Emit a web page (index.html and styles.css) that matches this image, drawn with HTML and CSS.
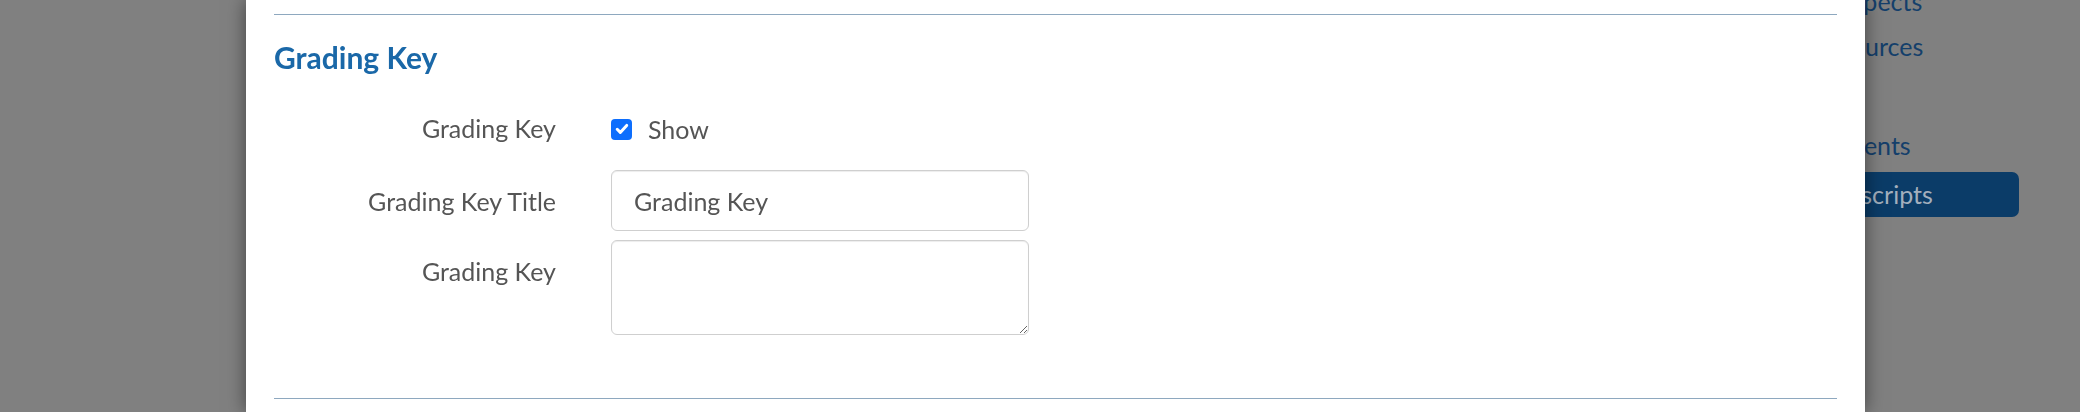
FILE: index.html
```html
<!DOCTYPE html>
<html lang="en">
<head>
<meta charset="utf-8">
<title>Grading Key</title>
<link rel="stylesheet" href="styles.css">
</head>
<body>
<div class="page">
  <nav class="sidebar">
    <a class="nav-item nav-prospects">Prospects</a>
    <a class="nav-item nav-resources">Resources</a>
    <span class="nav-divider"></span>
    <a class="nav-item nav-students">Students</a>
    <a class="nav-item nav-transcripts active">Transcripts</a>
  </nav>
</div>
<div class="modal">
  <div class="modal-body">
    <section class="section">
      <h2 class="section-title">Grading Key</h2>
      <div class="form-row row-check">
        <label class="form-label">Grading Key</label>
        <div class="form-control-wrap check-wrap">
          <span class="checkbox"><svg width="16" height="16" viewBox="0 0 16 16"><path d="M3.2 8.3l3.1 3.1 6.4-7" fill="none" stroke="#fff" stroke-width="3" stroke-linecap="round" stroke-linejoin="round"/></svg></span>
          <span class="check-text">Show</span>
        </div>
      </div>
      <div class="form-row row-title">
        <label class="form-label">Grading Key Title</label>
        <input class="text-input" type="text" value="Grading Key">
      </div>
      <div class="form-row row-area">
        <label class="form-label">Grading Key</label>
        <textarea class="text-area"></textarea>
      </div>
    </section>
    <div class="section-end"></div>
  </div>
</div>
</body>
</html>
```
FILE: styles.css
```css
html, body {
  margin: 0;
  padding: 0;
  height: 412px;
  overflow: hidden;
}
body {
  background: #808080;
  font-family: "Lato", "Liberation Sans", sans-serif;
}
.page {
  display: flex;
  justify-content: flex-end;
  height: 412px;
}
.sidebar {
  width: 286px;
  display: flex;
  flex-direction: column;
}
.nav-item {
  display: block;
  width: 225px;
  box-sizing: border-box;
  padding: 0 0 0 20px;
  height: 45px;
  line-height: 45px;
  margin-bottom: 4px;
  font-size: 25px;
  color: #143f6b;
  border-radius: 7px;
  white-space: nowrap;
}
.nav-prospects {
  margin-top: -24px;
  line-height: 50px;
  padding-left: 21px;
}
.nav-resources {
  line-height: 42px;
  padding-left: 18px;
}
.nav-students {
  padding-left: 20px;
}
.nav-transcripts {
  padding-left: 20px;
}
.nav-divider {
  display: block;
  height: 49px;
}
.nav-item.active {
  background: #0b3c68;
  color: #a3afbd;
}
.modal {
  position: fixed;
  left: 246px;
  top: 0;
  width: 1619px;
  height: 412px;
  background: #fff;
  box-shadow: 0 0 18px rgba(0, 0, 0, 0.5);
}
.modal-body {
  padding: 14px 28px 0;
}
.section {
  border-top: 1px solid #8ea8bf;
  padding-top: 22px;
}
.section-title {
  margin: 0 0 34px;
  font-size: 30px;
  line-height: 40px;
  font-weight: 700;
  color: #1a68a8;
}
.form-row {
  display: grid;
  grid-template-columns: 282px 418px;
  column-gap: 55px;
  align-items: start;
}
.form-label {
  text-align: right;
  font-size: 25px;
  line-height: 36px;
  color: #555;
}
.row-check {
  margin-bottom: 23px;
}
.row-check .form-label {
  margin-top: -1px;
}
.check-wrap {
  display: flex;
  align-items: center;
  height: 36px;
  gap: 16px;
}
.checkbox {
  width: 21px;
  height: 21px;
  border-radius: 4px;
  background: #0d6efd;
  display: flex;
  align-items: center;
  justify-content: center;
}
.check-text {
  font-size: 25px;
  color: #555;
}
.row-title {
  margin-bottom: 9px;
}
.row-title .form-label,
.row-area .form-label {
  padding-top: 13px;
}
.text-input,
.text-area {
  box-sizing: border-box;
  width: 418px;
  border: 1px solid #cfcfcf;
  border-radius: 6px;
  box-shadow: inset 0 1px 1px rgba(0, 0, 0, 0.075);
  font-family: inherit;
  font-size: 25px;
  color: #555;
  background: #fff;
  margin: 0;
}
.text-input {
  height: 61px;
  padding: 0 22px;
}
.text-area {
  height: 95px;
  padding: 10px 22px;
  display: block;
}
.section-end {
  margin-top: 63px;
  border-top: 1px solid #8ea8bf;
}
```
